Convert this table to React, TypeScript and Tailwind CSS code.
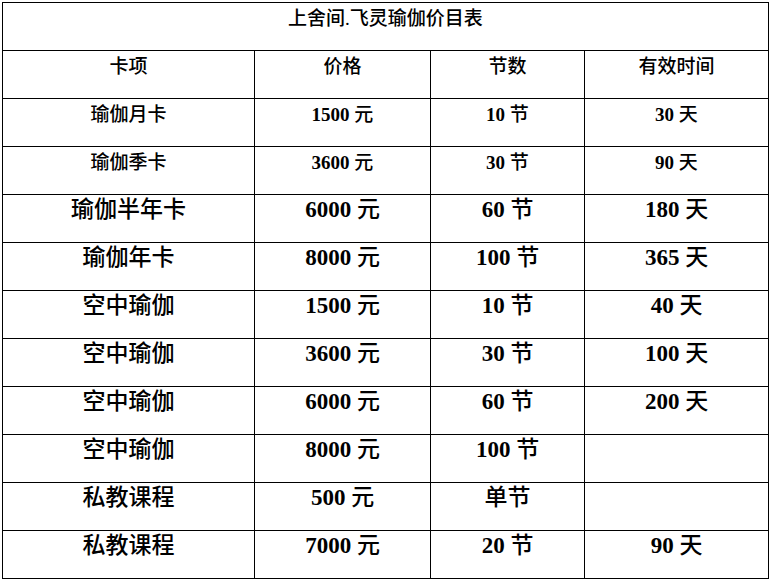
import React from 'react';

type Row = { name: string; price: string; count: string; days: string; big?: boolean };

const rows: Row[] = [
    { name: '瑜伽月卡', price: '1500 元', count: '10 节', days: '30 天' },
    { name: '瑜伽季卡', price: '3600 元', count: '30 节', days: '90 天' },
    { name: '瑜伽半年卡', price: '6000 元', count: '60 节', days: '180 天', big: true },
    { name: '瑜伽年卡', price: '8000 元', count: '100 节', days: '365 天', big: true },
    { name: '空中瑜伽', price: '1500 元', count: '10 节', days: '40 天', big: true },
    { name: '空中瑜伽', price: '3600 元', count: '30 节', days: '100 天', big: true },
    { name: '空中瑜伽', price: '6000 元', count: '60 节', days: '200 天', big: true },
    { name: '空中瑜伽', price: '8000 元', count: '100 节', days: '', big: true },
    { name: '私教课程', price: '500 元', count: '单节', days: '', big: true },
    { name: '私教课程', price: '7000 元', count: '20 节', days: '90 天', big: true },
];

// 숫자 부분만 굵게
function Text({ value }: { value: string }) {
    const parts = value.split(/(\d+)/).filter(Boolean);
    return (
        <>
            {parts.map((p, i) =>
                /\d/.test(p) ? (
                    <span key={i} className="font-bold" style={{ fontFamily: '"Liberation Serif", serif' }}>{p}</span>
                ) : (
                    <span key={i} className="font-medium">{p}</span>
                )
            )}
        </>
    );
}

function Cell({ value, big }: { value: string; big?: boolean }) {
    return (
        <div
            className={`h-[48px] border-r border-b border-black text-center ${big ? 'text-[23px] leading-[29px]' : 'text-[19px] leading-[31px]'}`}
        >
            <Text value={value} />
        </div>
    );
}

export default function App() {
    return (
        <div className="min-h-screen bg-white pl-[2px] pt-[2px] text-black" style={{ fontFamily: '"Liberation Serif", "Noto Sans CJK SC", serif' }}>
            <div className="grid w-[767px] grid-cols-[252px_176px_154px_184px] border-l border-t border-black">
                <div className="col-span-4 h-[48px] border-r border-b border-black text-center text-[19px] leading-[31px]">
                    <span className="font-medium">上舍间.飞灵瑜伽价目表</span>
                </div>
                <Cell value="卡项" />
                <Cell value="价格" />
                <Cell value="节数" />
                <Cell value="有效时间" />
                {rows.map((r, i) => (
                    <React.Fragment key={i}>
                        <Cell value={r.name} big={r.big} />
                        <Cell value={r.price} big={r.big} />
                        <Cell value={r.count} big={r.big} />
                        <Cell value={r.days} big={r.big} />
                    </React.Fragment>
                ))}
            </div>
        </div>
    );
}
